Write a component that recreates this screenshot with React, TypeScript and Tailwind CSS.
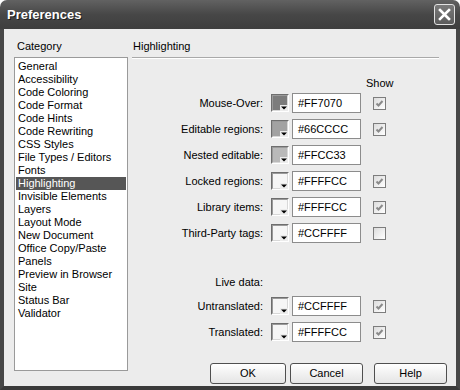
import React from 'react';

const categories = [
  'General',
  'Accessibility',
  'Code Coloring',
  'Code Format',
  'Code Hints',
  'Code Rewriting',
  'CSS Styles',
  'File Types / Editors',
  'Fonts',
  'Highlighting',
  'Invisible Elements',
  'Layers',
  'Layout Mode',
  'New Document',
  'Office Copy/Paste',
  'Panels',
  'Preview in Browser',
  'Site',
  'Status Bar',
  'Validator',
];

type Row = { label: string; fill: string; hex: string; show: boolean | null };

const rows: Row[] = [
  { label: 'Mouse-Over:', fill: 'bg-[#7c7c7c]', hex: '#FF7070', show: true },
  { label: 'Editable regions:', fill: 'bg-[#a2a2a2]', hex: '#66CCCC', show: true },
  { label: 'Nested editable:', fill: 'bg-[#b9b9b9]', hex: '#FFCC33', show: null },
  { label: 'Locked regions:', fill: 'bg-[#f6f6f6]', hex: '#FFFFCC', show: true },
  { label: 'Library items:', fill: 'bg-[#f6f6f6]', hex: '#FFFFCC', show: true },
  { label: 'Third-Party tags:', fill: 'bg-[#f6f6f6]', hex: '#CCFFFF', show: false },
];

const liveRows: Row[] = [
  { label: 'Untranslated:', fill: 'bg-[#f6f6f6]', hex: '#CCFFFF', show: true },
  { label: 'Translated:', fill: 'bg-[#f6f6f6]', hex: '#FFFFCC', show: true },
];

function Swatch({ fill }: { fill: string }) {
  return (
    <div className="relative w-[18px] h-[18px] border border-t-[#6e6e6e] border-l-[#6e6e6e] border-r-white border-b-white">
      <div className={`w-full h-full border border-t-[#9a9a9a] border-l-[#9a9a9a] border-r-[#d8d8d8] border-b-[#d8d8d8] ${fill}`} />
      <div className="absolute right-0 bottom-0 w-[8px] h-[6px] bg-[#ececec] flex items-center justify-center">
        <svg width="6" height="4" viewBox="0 0 6 4">
          <path d="M0 0.5h6L3 3.5z" fill="#000" />
        </svg>
      </div>
    </div>
  );
}

function CheckBox({ checked }: { checked: boolean }) {
  return (
    <div className="w-[13px] h-[13px] border border-[#7d7d7d] bg-gradient-to-br from-[#dcdcdc] to-white flex items-center justify-center">
      {checked && (
        <svg width="9" height="9" viewBox="0 0 9 9">
          <path d="M1.5 4.5l2 2 4-4.5" fill="none" stroke="#8a8a8a" strokeWidth="2" />
        </svg>
      )}
    </div>
  );
}

function ColorRow({ row }: { row: Row }) {
  return (
    <div className="flex items-center h-[26px]">
      <div className="w-[131px] text-right">{row.label}</div>
      <div className="ml-[8px]">
        <Swatch fill={row.fill} />
      </div>
      <div className="ml-[3px] w-[69px] h-[20px] border border-[#8c8c8c] bg-white pl-[5px] flex items-center">
        {row.hex}
      </div>
      <div className="ml-[5px] w-[26px] flex justify-center">
        {row.show !== null && <CheckBox checked={row.show} />}
      </div>
    </div>
  );
}

function Button({ label, className }: { label: string; className: string }) {
  return (
    <button
      className={`h-[21px] rounded-[3px] border border-[#4f4f4f] bg-gradient-to-b from-white to-[#e4e4e4] text-black ${className}`}
    >
      {label}
    </button>
  );
}

export default function App() {
  return (
    <div className="w-[460px] h-[390px] bg-white font-['Liberation_Sans',Arial,sans-serif] text-[11px] leading-[13px] text-black">
      <div className="w-full h-full flex flex-col rounded-t-[7px] overflow-hidden">
        {/* Title bar */}
        <div className="h-[29px] flex items-center justify-between pl-[7px] pr-[5px] bg-gradient-to-b from-[#626262] via-[#474747] to-[#3e3e3e]">
          <span className="text-white font-bold text-[13px] [text-shadow:1px_1px_0_#1e1e1e]">Preferences</span>
          <div className="w-[21px] h-[21px] rounded-[3px] border border-[#e2e2e2] bg-gradient-to-b from-[#7a7a7a] to-[#5c5c5c] flex items-center justify-center">
            <svg width="13" height="13" viewBox="0 0 13 13">
              <path d="M2 2l9 9M11 2l-9 9" stroke="#fff" strokeWidth="2.6" strokeLinecap="square" />
            </svg>
          </div>
        </div>

        {/* Client area */}
        <div className="flex-1 flex bg-[#ececec] border-x-4 border-b-4 border-x-[#474747] border-b-[#3a3a3a]">
          {/* Category column */}
          <div className="ml-[10px] w-[114px] flex flex-col">
            <div className="mt-[11px] pl-[3px]">Category</div>
            <div className="mt-[4px] h-[314px] bg-white border border-[#9a9a9a] pt-[2px]">
              {categories.map((c) =>
                c === 'Highlighting' ? (
                  <div key={c} className="h-[13px] mx-[1px] px-[2px] bg-[#565656] text-white whitespace-nowrap">
                    {c}
                  </div>
                ) : (
                  <div key={c} className="h-[13px] mx-[1px] px-[2px] whitespace-nowrap">
                    {c}
                  </div>
                )
              )}
            </div>
          </div>

          {/* Settings panel */}
          <div className="ml-[4px] flex-1 flex flex-col pr-[9px]">
            <div className="mt-[11px] pl-[1px]">Highlighting</div>
            <div className="mt-[4px] mr-[8px] h-px bg-[#a9a9a9]" />
            <div className="mr-[8px] h-px bg-white" />
            <div className="mt-[18px] pl-[234px] w-[260px] text-center">Show</div>

            {rows.map((r) => (
              <ColorRow key={r.label} row={r} />
            ))}

            <div className="mt-[30px] w-[131px] h-[13px] text-right">Live data:</div>
            <div className="mt-[4px]">
              {liveRows.map((r) => (
                <ColorRow key={r.label} row={r} />
              ))}
            </div>

            <div className="mt-[18px] flex justify-end">
              <Button label="OK" className="w-[76px]" />
              <Button label="Cancel" className="ml-[4px] w-[73px]" />
              <Button label="Help" className="ml-[11px] w-[73px]" />
            </div>
          </div>
        </div>
      </div>
    </div>
  );
}
